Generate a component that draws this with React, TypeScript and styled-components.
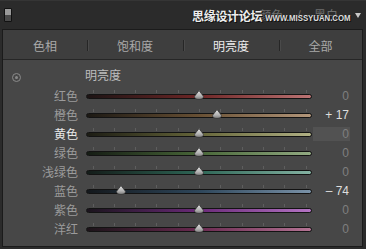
import React from "react";
import styled, { createGlobalStyle } from "styled-components";

const Global = createGlobalStyle`
  html, body { margin: 0; padding: 0; background: #2b2b2b; }
  body { width: 366px; height: 249px; overflow: hidden; }
`;

const CJK = `"Noto Sans CJK SC", "Noto Sans", sans-serif`;

const Root = styled.div`
  width: 366px;
  height: 249px;
  background: #2b2b2b;
  display: flex;
  flex-direction: column;
  font-family: ${CJK};
  box-sizing: border-box;
  border-top: 1px solid #353535;
`;

const Header = styled.div`
  position: relative;
  height: 28px;
  display: flex;
  align-items: center;
  padding: 0 5px 0 4px;
`;

const PanelIcon = styled.div`
  width: 6px;
  height: 12px;
  border: 1px solid #121212;
  border-radius: 1px;
  background: linear-gradient(#9a9a9a 0 50%, #4a4a4a 50% 100%);
`;

const Nav = styled.div`
  margin-left: auto;
  display: flex;
  align-items: center;
  gap: 13px;
  font-size: 12px;
  line-height: 14px;
  color: #6e6e6e;
`;

const Caret = styled.div`
  margin-left: 17px;
  width: 0;
  height: 0;
  border-left: 3px solid transparent;
  border-right: 3px solid transparent;
  border-top: 5px solid #c8c8c8;
`;

const Watermark = styled.div`
  position: absolute;
  left: 192px;
  top: 8px;
  display: flex;
  align-items: center;
  gap: 3px;
  color: #ededed;
  text-shadow: 1px 1px 0 #111, -1px 0 0 #222;
`;

const WmCn = styled.span`
  font-family: ${CJK};
  font-weight: 700;
  font-size: 12px;
  line-height: 14px;
  letter-spacing: -0.3px;
`;

const WmEn = styled.span`
  font-family: "Liberation Sans", Arial, sans-serif;
  font-weight: 700;
  font-size: 7.8px;
  line-height: 9px;
  margin-top: 3px;
  transform: scaleY(1.25);
  transform-origin: center;
  color: #dcdcdc;
`;

const Panel = styled.div`
  margin: 0 3px 0 2px;
  height: 216px;
  border: 1px solid #1b1b1b;
  display: flex;
  flex-direction: column;
  background: #474747;
`;

const Tabs = styled.div`
  height: 29px;
  display: grid;
  grid-template-columns: 84px 96px 96px 1fr;
  align-items: center;
  background: #3e3e3e;
  border-bottom: 1px solid #262626;
`;

const Tab = styled.div<{ $active?: boolean; $divider?: boolean }>`
  position: relative;
  text-align: center;
  font-size: 12px;
  line-height: 14px;
  padding-top: 2px;
  color: ${(p) => (p.$active ? "#ececec" : "#a9a9a9")};
  &::before {
    content: "";
    display: ${(p) => (p.$divider ? "block" : "none")};
    position: absolute;
    left: 0;
    top: 3px;
    width: 1px;
    height: 11px;
    background: #262626;
    box-shadow: 1px 0 0 #4a4a4a;
  }
`;

const Content = styled.div`
  display: flex;
  flex-direction: column;
  padding-top: 8px;
`;

const TitleRow = styled.div`
  display: grid;
  grid-template-columns: 82px 1fr;
  align-items: center;
  height: 14px;
  margin-bottom: 4px;
`;

const Target = styled.div`
  margin-left: 9px;
  margin-top: 4px;
  width: 7px;
  height: 7px;
  border-radius: 50%;
  border: 1px solid #8a8a8a;
  display: flex;
  align-items: center;
  justify-content: center;
  &::after {
    content: "";
    width: 3px;
    height: 3px;
    border-radius: 50%;
    background: #8a8a8a;
  }
`;

const Title = styled.div`
  font-size: 12px;
  line-height: 14px;
  color: #bdbdbd;
`;

const Row = styled.div`
  display: grid;
  grid-template-columns: 84px 226px 37px;
  height: 19px;
  align-items: center;
`;

const Label = styled.div<{ $active?: boolean }>`
  text-align: right;
  padding-right: 9px;
  font-size: 12px;
  line-height: 14px;
  color: ${(p) => (p.$active ? "#e8e8e8" : "#9b9b9b")};
`;

const SliderCell = styled.div`
  position: relative;
  height: 19px;
  width: 224px;
`;

const Ticks = styled.svg`
  position: absolute;
  left: 0;
  top: 4px;
`;

const TrackLine = styled.div<{ $grad: string }>`
  position: absolute;
  left: -1px;
  right: -1px;
  top: 8px;
  height: 3px;
  border: 1px solid #131313;
  border-radius: 3px;
  background: ${(p) => p.$grad};
`;

const Thumb = styled.svg`
  position: absolute;
  top: 4px;
`;

const Value = styled.div<{ $active?: boolean; $bright?: boolean }>`
  height: 14px;
  text-align: right;
  padding-right: 1px;
  font-family: "Liberation Sans", Arial, sans-serif;
  font-size: 12px;
  line-height: 14px;
  color: ${(p) => (p.$bright ? "#dedede" : "#7f7f7f")};
  background: ${(p) => (p.$active ? "#525252" : "transparent")};
  white-space: pre;
`;

type Item = {
  label: string;
  value: number;
  grad: [string, string, string];
  active?: boolean;
};

const items: Item[] = [
  { label: "红色", value: 0, grad: ["#1c1414", "#6e2626", "#bc7474"] },
  { label: "橙色", value: 17, grad: ["#1c1914", "#685034", "#b2967a"] },
  { label: "黄色", value: 0, grad: ["#1c1c14", "#66663a", "#b0b084"], active: true },
  { label: "绿色", value: 0, grad: ["#151c14", "#486638", "#92aa82"] },
  { label: "浅绿色", value: 0, grad: ["#141c19", "#2e6656", "#84b2a2"] },
  { label: "蓝色", value: -74, grad: ["#14181c", "#2e465a", "#7a92a8"] },
  { label: "紫色", value: 0, grad: ["#1a141c", "#6a2a78", "#b474c4"] },
  { label: "洋红", value: 0, grad: ["#1c1419", "#6a2a50", "#b47494"] },
];

const tabs = ["色相", "饱和度", "明亮度", "全部"];

const tickXs = Array.from({ length: 11 }, (_, k) => 5.5 + k * 21.3);

function formatValue(v: number) {
  if (v > 0) return `+ ${v}`;
  if (v < 0) return `\u2013 ${Math.abs(v)}`;
  return "0";
}

function SliderRow({ item }: { item: Item }) {
  const thumbX = 112 + item.value * 1.05 - 5;
  const grad = `linear-gradient(90deg, ${item.grad[0]} 0%, ${item.grad[1]} 50%, ${item.grad[2]} 100%)`;
  return (
    <Row>
      <Label $active={item.active}>{item.label}</Label>
      <SliderCell>
        <Ticks width="224" height="3" viewBox="0 0 224 3">
          {tickXs.map((x) => (
            <rect key={x} x={Math.round(x)} y="0" width="1" height="3" fill="#5e5e5e" />
          ))}
        </Ticks>
        <TrackLine $grad={grad} />
        <Thumb width="10" height="10" viewBox="0 0 10 10" style={{ left: thumbX }}>
          <defs>
            <linearGradient id={`tg-${item.label}`} x1="0" y1="0" x2="0" y2="1">
              <stop offset="0" stopColor="#e0e0e0" />
              <stop offset="0.6" stopColor="#b4b4b4" />
              <stop offset="1" stopColor="#7a7a7a" />
            </linearGradient>
          </defs>
          <path
            d="M5 0.6 L9.4 6.2 Q9.6 9.4 5 9.4 Q0.4 9.4 0.6 6.2 Z"
            fill={`url(#tg-${item.label})`}
            stroke="#2a2a2a"
            strokeWidth="0.7"
          />
        </Thumb>
      </SliderCell>
      <Value $active={item.active} $bright={item.value !== 0}>
        {formatValue(item.value)}
      </Value>
    </Row>
  );
}

export default function App() {
  return (
    <>
      <Global />
      <Root>
        <Header>
          <PanelIcon />
          <Nav>
            <span>HSL</span>
            <span>/</span>
            <span>颜色</span>
            <span>/</span>
            <span>黑白</span>
          </Nav>
          <Caret />
          <Watermark>
            <WmCn>思缘设计论坛</WmCn>
            <WmEn>WWW.MISSYUAN.COM</WmEn>
          </Watermark>
        </Header>
        <Panel>
          <Tabs>
            {tabs.map((t, i) => (
              <Tab key={t} $active={i === 2} $divider={i > 0}>
                {t}
              </Tab>
            ))}
          </Tabs>
          <Content>
            <TitleRow>
              <Target />
              <Title>明亮度</Title>
            </TitleRow>
            {items.map((it) => (
              <SliderRow key={it.label} item={it} />
            ))}
          </Content>
        </Panel>
      </Root>
    </>
  );
}
